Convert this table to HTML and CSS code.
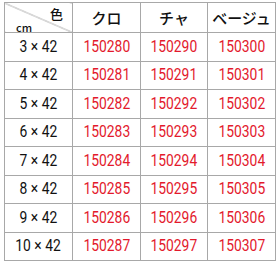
FILE: index.html
```html
<!DOCTYPE html>
<html lang="ja">
<head>
<meta charset="utf-8">
<link rel="stylesheet" href="styles.css">
</head>
<body>
<table class="chart">
  <colgroup>
    <col class="c1"><col class="c2"><col class="c3"><col class="c4">
  </colgroup>
  <thead>
    <tr class="head">
      <th class="corner"><div class="corner-in"><span class="iro">色</span><span class="cm">cm</span></div></th>
      <th>クロ</th>
      <th>チャ</th>
      <th>ベージュ</th>
    </tr>
  </thead>
  <tbody>
    <tr><td class="size"><span class="t">3 × 42</span></td><td class="num"><span class="t">150280</span></td><td class="num"><span class="t">150290</span></td><td class="num"><span class="t">150300</span></td></tr>
    <tr><td class="size"><span class="t">4 × 42</span></td><td class="num"><span class="t">150281</span></td><td class="num"><span class="t">150291</span></td><td class="num"><span class="t">150301</span></td></tr>
    <tr><td class="size"><span class="t">5 × 42</span></td><td class="num"><span class="t">150282</span></td><td class="num"><span class="t">150292</span></td><td class="num"><span class="t">150302</span></td></tr>
    <tr><td class="size"><span class="t">6 × 42</span></td><td class="num"><span class="t">150283</span></td><td class="num"><span class="t">150293</span></td><td class="num"><span class="t">150303</span></td></tr>
    <tr><td class="size"><span class="t">7 × 42</span></td><td class="num"><span class="t">150284</span></td><td class="num"><span class="t">150294</span></td><td class="num"><span class="t">150304</span></td></tr>
    <tr><td class="size"><span class="t">8 × 42</span></td><td class="num"><span class="t">150285</span></td><td class="num"><span class="t">150295</span></td><td class="num"><span class="t">150305</span></td></tr>
    <tr><td class="size"><span class="t">9 × 42</span></td><td class="num"><span class="t">150286</span></td><td class="num"><span class="t">150296</span></td><td class="num"><span class="t">150306</span></td></tr>
    <tr><td class="size"><span class="t">10 × 42</span></td><td class="num"><span class="t">150287</span></td><td class="num"><span class="t">150297</span></td><td class="num"><span class="t">150307</span></td></tr>
  </tbody>
</table>
</body>
</html>
```
FILE: styles.css
```css
html, body {
  margin: 0;
  padding: 0;
  background: #ffffff;
}
body {
  padding: 2px 0 0 4px;
  font-family: "Noto Sans CJK JP", "Noto Sans", sans-serif;
  color: #1a1a1a;
}
.chart {
  border-collapse: collapse;
  table-layout: fixed;
  width: 271px;
}
.c1 { width: 68px; }
.c2 { width: 68px; }
.c3 { width: 67px; }
.c4 { width: 68px; }
.chart th, .chart td {
  border: 1px solid #a8a8a8;
  padding: 0;
  text-align: center;
  vertical-align: middle;
}
.head th {
  height: 29px;
  font-size: 15px;
  font-weight: 500;
  color: #111;
}
.chart td {
  height: 27.5px;
  font-family: Roboto, "Noto Sans", sans-serif;
  font-size: 16.5px;
  line-height: 1;
}
.t {
  display: inline-block;
  transform: scaleX(0.84);
  white-space: nowrap;
}
.size {
  color: #111;
}
.num {
  color: #e3192c;
}
.corner {
  background: linear-gradient(to top right, transparent calc(50% - 0.7px), #9a9a9a 50%, transparent calc(50% + 0.7px));
}
.corner-in {
  display: flex;
  flex-direction: column;
  height: 29px;
  padding: 4px 9px 0 11px;
  box-sizing: border-box;
  line-height: 1;
}
.iro {
  align-self: flex-end;
  font-size: 13px;
}
.cm {
  align-self: flex-start;
  font-size: 11px;
  margin-top: 2px;
}
```
